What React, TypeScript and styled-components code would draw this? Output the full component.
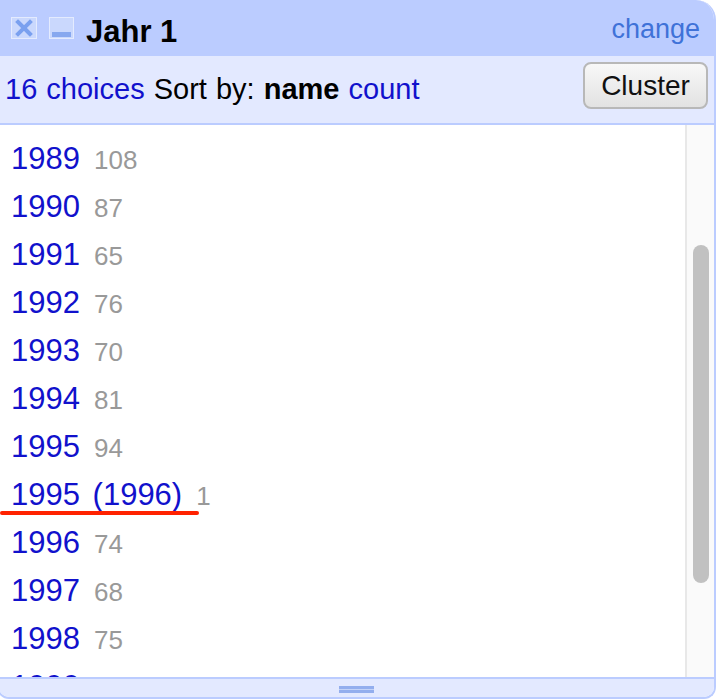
import React from "react";
import styled, { createGlobalStyle } from "styled-components";

const Global = createGlobalStyle`
  html, body { margin: 0; padding: 0; background: #ffffff; overflow: hidden; }
  body { font-family: "Liberation Sans", Arial, Helvetica, sans-serif; }
  * { box-sizing: border-box; }
`;

const Panel = styled.div`
  width: 719px;
  height: 699px;
  margin-left: -3px;
  border: 2px solid #bbccff;
  border-top: none;
  border-radius: 0 20px 12px 12px;
  overflow: hidden;
  display: flex;
  flex-direction: column;
  background: #ffffff;
`;

const Header = styled.div`
  height: 56px;
  flex: none;
  background: #bbccff;
  display: flex;
  align-items: flex-start;
  padding: 0 14px 0 12px;
`;

const IconBox = styled.span<{ $gap: number }>`
  display: block;
  width: 26px;
  height: 22px;
  margin-top: 17px;
  margin-right: ${(p) => p.$gap}px;
  flex: none;
`;

const Title = styled.span`
  font-size: 31px;
  line-height: 36px;
  font-weight: bold;
  color: #000;
  margin-top: 14px;
`;

const ChangeLink = styled.a`
  margin-left: auto;
  margin-top: 13px;
  font-size: 27px;
  line-height: 32px;
  color: #3f72d8;
  text-decoration: none;
  cursor: pointer;
`;

const Controls = styled.div`
  height: 69px;
  flex: none;
  background: #e3e9ff;
  border-bottom: 2px solid #bbccff;
  display: flex;
  align-items: flex-start;
  padding: 6px 6px 0 6px;
`;

const ControlText = styled.div`
  margin-top: 11px;
  font-size: 29px;
  line-height: 32px;
  word-spacing: 1px;
  color: #000;
  white-space: nowrap;
`;

const BlueLink = styled.a<{ $bold?: boolean }>`
  color: ${(p) => (p.$bold ? "#000" : "#1111cc")};
  font-weight: ${(p) => (p.$bold ? "bold" : "normal")};
  text-decoration: none;
  cursor: pointer;
`;

const ClusterButton = styled.button`
  margin-left: auto;
  width: 125px;
  height: 47px;
  border: 2px solid #b8b8b8;
  border-radius: 8px;
  background: linear-gradient(#f8f8f8, #e2e2e2);
  font-family: "Liberation Sans", Arial, Helvetica, sans-serif;
  font-size: 28px;
  color: #111;
  padding: 0;
  cursor: pointer;
`;

const Body = styled.div`
  height: 552px;
  flex: none;
  display: flex;
  background: #ffffff;
`;

const List = styled.div`
  flex: 1;
  overflow: hidden;
  padding: 10px 0 0 12px;
`;

const Row = styled.div`
  position: relative;
  height: 48px;
  display: flex;
  align-items: baseline;
  white-space: nowrap;
`;

const ChoiceName = styled.a`
  font-size: 31px;
  line-height: 48px;
  word-spacing: 4px;
  color: #1111cc;
  text-decoration: none;
  cursor: pointer;
`;

const ChoiceCount = styled.span`
  font-size: 26px;
  line-height: 48px;
  color: #999999;
  margin-left: 14px;
`;

const RedMark = styled.span`
  position: absolute;
  left: -11px;
  top: 40px;
  width: 199px;
  height: 4px;
  border-radius: 2px;
  background: #ff2200;
`;

const ScrollTrack = styled.div`
  width: 29px;
  flex: none;
  background: #fafafa;
  border-left: 2px solid #e8e8e8;
  padding: 120px 0 0 6px;
`;

const ScrollThumb = styled.div`
  width: 16px;
  height: 338px;
  border-radius: 8px;
  background: #c1c1c1;
`;

const Footer = styled.div`
  flex: 1;
  background: #e3e9ff;
  border-top: 2px solid #bbccff;
  display: flex;
  justify-content: center;
  align-items: center;
`;

const Grip = styled.div`
  width: 35px;
  height: 7px;
  border-top: 3px solid #93aeee;
  border-bottom: 3px solid #93aeee;
  background: #c4d3f8;
  margin-top: 2px;
`;

const CloseIcon = () => (
  <svg width="26" height="22" viewBox="0 0 26 22">
    <rect x="0.5" y="0.5" width="25" height="21" fill="#cad8fd" stroke="#e4ebfe" />
    <path d="M7 5 L19 17 M19 5 L7 17" stroke="#7aa0ef" strokeWidth="4" strokeLinecap="square" />
  </svg>
);

const MinIcon = () => (
  <svg width="26" height="22" viewBox="0 0 26 22">
    <rect x="0.5" y="0.5" width="24" height="21" fill="#cad8fd" stroke="#e4ebfe" />
    <rect x="3" y="15" width="19" height="5" fill="#87a8ef" />
  </svg>
);

const choices: { name: string; count: number; marked?: boolean }[] = [
  { name: "1989", count: 108 },
  { name: "1990", count: 87 },
  { name: "1991", count: 65 },
  { name: "1992", count: 76 },
  { name: "1993", count: 70 },
  { name: "1994", count: 81 },
  { name: "1995", count: 94 },
  { name: "1995 (1996)", count: 1, marked: true },
  { name: "1996", count: 74 },
  { name: "1997", count: 68 },
  { name: "1998", count: 75 },
  { name: "1999", count: 79 },
];

export default function App() {
  return (
    <>
      <Global />
      <Panel>
        <Header>
          <IconBox $gap={12}>
            <CloseIcon />
          </IconBox>
          <IconBox $gap={11}>
            <MinIcon />
          </IconBox>
          <Title>Jahr 1</Title>
          <ChangeLink>change</ChangeLink>
        </Header>
        <Controls>
          <ControlText>
            <BlueLink>16 choices</BlueLink> Sort by: <BlueLink $bold>name</BlueLink>{" "}
            <BlueLink>count</BlueLink>
          </ControlText>
          <ClusterButton>Cluster</ClusterButton>
        </Controls>
        <Body>
          <List>
            {choices.map((c) => (
              <Row key={c.name}>
                <ChoiceName>{c.name}</ChoiceName>
                <ChoiceCount>{c.count}</ChoiceCount>
                {c.marked && <RedMark />}
              </Row>
            ))}
          </List>
          <ScrollTrack>
            <ScrollThumb />
          </ScrollTrack>
        </Body>
        <Footer>
          <Grip />
        </Footer>
      </Panel>
    </>
  );
}
